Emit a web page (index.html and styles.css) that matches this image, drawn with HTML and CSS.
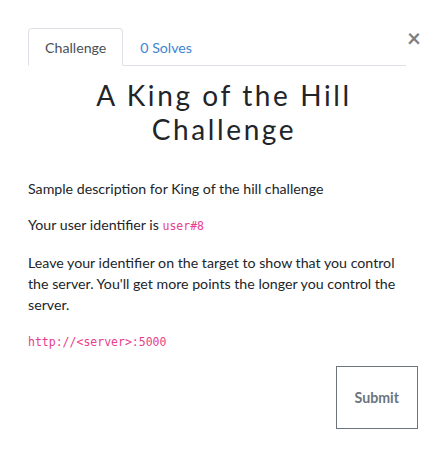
FILE: index.html
```html
<!DOCTYPE html>
<html>
<head>
<meta charset="utf-8">
<link rel="stylesheet" href="styles.css">
</head>
<body>
<div class="modal">
  <div class="header">
    <ul class="tabs">
      <li class="tab active">Challenge</li>
      <li class="tab">0 Solves</li>
    </ul>
    <button class="close" type="button">&times;</button>
  </div>
  <h3 class="title">A King of the Hill Challenge</h3>
  <div class="desc">
    <p>Sample description for King of the hill challenge</p>
    <p>Your user identifier is <code>user#8</code></p>
    <p>Leave your identifier on the target to show that you control the server. You'll get more points the longer you control the server.</p>
    <p class="last"><code>http://&lt;server&gt;:5000</code></p>
  </div>
  <div class="actions">
    <button class="submit" type="button">Submit</button>
  </div>
</div>
</body>
</html>
```
FILE: styles.css
```css
* { box-sizing: border-box; }
html, body { margin: 0; background: #fff; }
body {
  font-family: Lato, "Noto Sans", sans-serif;
  font-size: 14.2px;
  line-height: 21px;
  color: #212529;
}
.modal {
  padding: 28px 27px 0 28px;
}
.header {
  display: flex;
  align-items: flex-start;
}
.tabs {
  flex: 1;
  display: flex;
  list-style: none;
  margin: 0;
  padding: 0;
  border-bottom: 1px solid #dee2e6;
}
.tab {
  padding: 8px 16px 7px;
  border: 1px solid transparent;
  border-top-left-radius: 4px;
  border-top-right-radius: 4px;
  margin-bottom: -1px;
  color: #3d84d2;
  font-size: 14.2px;
  line-height: 21px;
}
.tab.active {
  color: #495057;
  border-color: #dee2e6 #dee2e6 #fff;
}
.close {
  background: none;
  border: 0;
  padding: 0 0 0 1px;
  margin: 0;
  font-family: Lato, sans-serif;
  font-size: 24px;
  font-weight: 700;
  line-height: 20px;
  color: #000;
  opacity: .5;
  width: 12px;
}
.title {
  margin: 13px 0 0;
  text-align: center;
  font-family: Lato, sans-serif;
  font-weight: 400;
  font-size: 28px;
  line-height: 33.6px;
  letter-spacing: 2.6px;
  padding: 0 60px 0 62px;
}
.desc {
  margin-top: 32px;
  padding-right: 12px;
}
.desc p {
  margin: 0 0 15px;
}
.desc p.last {
  margin-bottom: 13px;
}
code {
  font-family: "DejaVu Sans Mono", monospace;
  font-size: 11.5px;
  color: #e83e8c;
}
.actions {
  display: flex;
  justify-content: flex-end;
}
.submit {
  background: #fff;
  border: 1px solid #6c757d;
  border-radius: 0;
  color: #6c757d;
  font-family: Lato, sans-serif;
  font-weight: 700;
  font-size: 14.2px;
  line-height: 21px;
  padding: 20px 18px;
}
```
